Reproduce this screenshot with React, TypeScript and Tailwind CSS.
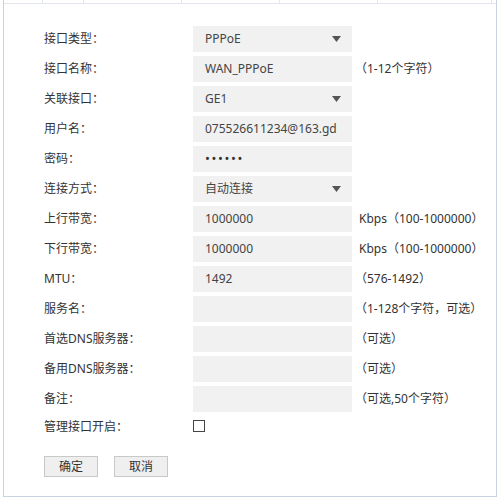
import React from "react";

type Row = {
  label: React.ReactNode;
  kind: "select" | "input" | "password" | "checkbox";
  value?: string;
  hint?: string;
  kbps?: boolean;
};

const rows: Row[] = [
  { label: "接口类型：", kind: "select", value: "PPPoE" },
  { label: "接口名称：", kind: "input", value: "WAN_PPPoE", hint: "（1-12个字符）" },
  { label: "关联接口：", kind: "select", value: "GE1" },
  { label: "用户名：", kind: "input", value: "075526611234@163.gd" },
  { label: "密码：", kind: "password", value: "••••••" },
  { label: "连接方式：", kind: "select", value: "自动连接" },
  { label: "上行带宽：", kind: "input", value: "1000000", hint: "Kbps（100-1000000）", kbps: true },
  { label: "下行带宽：", kind: "input", value: "1000000", hint: "Kbps（100-1000000）", kbps: true },
  { label: "MTU：", kind: "input", value: "1492", hint: "（576-1492）" },
  { label: "服务名：", kind: "input", value: "", hint: "（1-128个字符，可选）" },
  { label: "首选DNS服务器：", kind: "input", value: "", hint: "（可选）" },
  { label: "备用DNS服务器：", kind: "input", value: "", hint: "（可选）" },
  { label: "备注：", kind: "input", value: "", hint: "（可选,50个字符）" },
];

function Caret() {
  return (
    <svg width="9" height="6" viewBox="0 0 9 6" className="block">
      <path d="M0 0 H9 L4.5 6 Z" fill="#555" />
    </svg>
  );
}

export default function App() {
  const font = { fontFamily: '"Noto Sans", "Noto Sans CJK SC", sans-serif' };
  return (
    <div className="w-[500px] h-[499px] bg-white text-[12px] text-[#333]" style={font}>
      <div className="ml-[3px] w-[494px] h-[497px] border-l border-r border-b border-[#c6d2e0] flex flex-col">
        <div className="h-[4px] border-b border-[#e2e7ee] flex">
          <div className="w-[39px] border-r border-[#e2e7ee]" />
          <div className="w-[41px] border-r border-[#e2e7ee]" />
          <div className="w-[98px] border-r border-[#e2e7ee]" />
          <div className="w-[98px] border-r border-[#e2e7ee]" />
          <div className="w-[98px] border-r border-[#e2e7ee]" />
          <div className="w-[114px] border-r border-[#e2e7ee]" />
          <div className="flex-1" />
        </div>
        <div className="pl-[40px] pt-[22px] flex flex-col">
          {rows.map((r, i) => (
            <div key={i} className="flex items-center h-[26px] mb-[4px]">
              <div className="w-[149px] leading-[26px] whitespace-nowrap">{r.label}</div>
              <div className="w-[159px] h-[26px] bg-[#f1f1f1] flex items-center pl-[12px] pr-[11px]">
                <span
                  className={
                    r.kind === "password"
                      ? "flex-1 text-[13px] tracking-[1.6px] text-[#333]"
                      : "flex-1 text-[#444] whitespace-nowrap"
                  }
                >
                  {r.value}
                </span>
                {r.kind === "select" && <Caret />}
              </div>
              {r.hint && (
                <div className={r.kbps ? "ml-[7px] whitespace-nowrap" : "ml-[3px] whitespace-nowrap"}>
                  {r.hint}
                </div>
              )}
            </div>
          ))}
          <div className="flex items-center h-[22px]">
            <div className="w-[149px] whitespace-nowrap">管理接口开启：</div>
            <div className="w-[12px] h-[12px] border border-[#444] bg-white -mt-[2px]" />
          </div>
          <div className="flex gap-[16px] mt-[18px]">
            <button className="w-[54px] h-[21px] border border-[#c8c8c8] bg-[#efefef] text-[12px] text-[#333] leading-[19px]">
              确定
            </button>
            <button className="w-[54px] h-[21px] border border-[#c8c8c8] bg-[#efefef] text-[12px] text-[#333] leading-[19px]">
              取消
            </button>
          </div>
        </div>
      </div>
    </div>
  );
}
